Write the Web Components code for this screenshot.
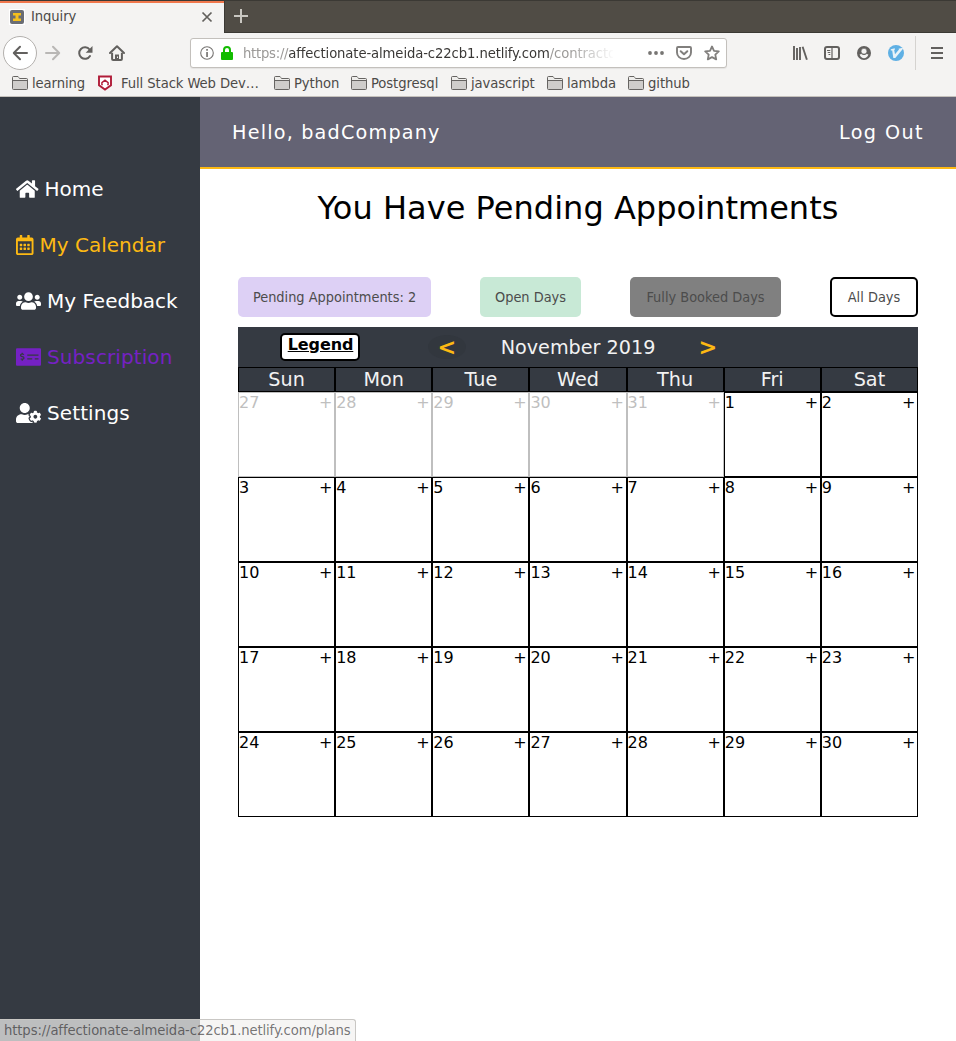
<!DOCTYPE html>
<html lang="en">
<head>
<meta charset="utf-8">
<title>Inquiry</title>
<style>
html,body{margin:0;height:100%;overflow:hidden;background:#fff;font-family:"DejaVu Sans",sans-serif}
</style>
</head>
<body>
<inquiry-window></inquiry-window>
<script>
const define=(name,html,render)=>customElements.define(name,class extends HTMLElement{
  constructor(){
    super();
    const root=this.attachShadow({mode:'open'});
    const t=document.createElement('template');
    t.innerHTML=typeof html==='function'?html(this):html;
    root.append(t.content.cloneNode(true));
  }
  connectedCallback(){ if(render) render(this,this.shadowRoot); }
});
const UI='font-family:"DejaVu Sans Condensed","DejaVu Sans",sans-serif;font-stretch:condensed;';

const ICONS={
 home:['0 0 576 512',22.5,20,'<path fill="currentColor" d="M280.37 148.26L96 300.11V464a16 16 0 0 0 16 16l112.06-.29a16 16 0 0 0 15.92-16V368a16 16 0 0 1 16-16h64a16 16 0 0 1 16 16v95.64a16 16 0 0 0 16 16.05L464 480a16 16 0 0 0 16-16V300L295.67 148.26a12.19 12.19 0 0 0-15.3 0zM571.6 251.47L488 182.56V44.05a12 12 0 0 0-12-12h-56a12 12 0 0 0-12 12v72.61L318.47 43a48 48 0 0 0-61 0L4.34 251.47a12 12 0 0 0-1.6 16.9l25.5 31A12 12 0 0 0 45.15 301l235.22-193.74a12.19 12.19 0 0 1 15.3 0L530.9 301a12 12 0 0 0 16.9-1.6l25.5-31a12 12 0 0 0-1.7-16.93z"/>'],
 calendar:['0 0 448 512',17.5,20,'<path fill="currentColor" d="M148 288h-40c-6.6 0-12-5.4-12-12v-40c0-6.6 5.4-12 12-12h40c6.6 0 12 5.4 12 12v40c0 6.6-5.4 12-12 12zm108-12v-40c0-6.6-5.4-12-12-12h-40c-6.6 0-12 5.4-12 12v40c0 6.6 5.4 12 12 12h40c6.6 0 12-5.4 12-12zm96 0v-40c0-6.6-5.4-12-12-12h-40c-6.6 0-12 5.4-12 12v40c0 6.6 5.4 12 12 12h40c6.6 0 12-5.4 12-12zm-96 96v-40c0-6.6-5.4-12-12-12h-40c-6.6 0-12 5.4-12 12v40c0 6.6 5.4 12 12 12h40c6.6 0 12-5.4 12-12zm-96 0v-40c0-6.6-5.4-12-12-12h-40c-6.6 0-12 5.4-12 12v40c0 6.6 5.4 12 12 12h40c6.6 0 12-5.4 12-12zm192 0v-40c0-6.6-5.4-12-12-12h-40c-6.6 0-12 5.4-12 12v40c0 6.6 5.4 12 12 12h40c6.6 0 12-5.4 12-12zm96-260v352c0 26.5-21.5 48-48 48H48c-26.5 0-48-21.5-48-48V112c0-26.5 21.5-48 48-48h48V12c0-6.6 5.4-12 12-12h40c6.6 0 12 5.4 12 12v52h128V12c0-6.6 5.4-12 12-12h40c6.6 0 12 5.4 12 12v52h48c26.5 0 48 21.5 48 48zm-48 346V160H48v298c0 3.3 2.7 6 6 6h340c3.3 0 6-2.7 6-6z"/>'],
 users:['0 0 640 512',25,20,'<path fill="currentColor" d="M96 224c35.3 0 64-28.7 64-64s-28.7-64-64-64-64 28.7-64 64 28.7 64 64 64zm448 0c35.3 0 64-28.7 64-64s-28.7-64-64-64-64 28.7-64 64 28.7 64 64 64zm32 32h-64c-17.6 0-33.5 7.1-45.1 18.6 40.3 22.1 68.9 62 75.1 109.4h66c17.7 0 32-14.3 32-32v-32c0-35.3-28.7-64-64-64zm-256 0c61.9 0 112-50.1 112-112S381.9 32 320 32 208 82.1 208 144s50.1 112 112 112zm76.8 32h-8.3c-20.8 10-43.9 16-68.5 16s-47.6-6-68.5-16h-8.3C179.6 288 128 339.6 128 403.2V432c0 26.5 21.5 48 48 48h288c26.5 0 48-21.5 48-48v-28.8c0-63.6-51.6-115.2-115.2-115.2zm-223.7-13.4C161.5 263.1 145.6 256 128 256H64c-35.3 0-64 28.7-64 64v32c0 17.7 14.3 32 32 32h65.9c6.3-47.4 34.9-87.3 75.2-109.4z"/>'],
 check:['0 0 640 512',25,20,'<path fill="currentColor" d="M608 32H32C14.33 32 0 46.33 0 64v384c0 17.67 14.33 32 32 32h576c17.67 0 32-14.33 32-32V64c0-17.67-14.33-32-32-32zM176 327.88V344c0 4.42-3.58 8-8 8h-16c-4.42 0-8-3.58-8-8v-16.29c-11.29-.58-22.27-4.52-31.37-11.35-3.9-2.93-4.1-8.77-.57-12.14l11.75-11.21c2.77-2.64 6.89-2.76 10.13-.73 3.87 2.42 8.26 3.72 12.82 3.72h28.11c6.5 0 11.8-5.92 11.8-13.19 0-5.95-3.61-11.19-8.77-12.73l-45-13.5c-18.59-5.58-31.58-23.42-31.58-43.39 0-24.52 19.05-44.44 42.67-45.07V152c0-4.42 3.58-8 8-8h16c4.42 0 8 3.58 8 8v16.29c11.29.58 22.27 4.51 31.37 11.35 3.9 2.93 4.1 8.77.57 12.14l-11.75 11.21c-2.77 2.64-6.89 2.76-10.13.73-3.87-2.43-8.26-3.72-12.82-3.72h-28.11c-6.5 0-11.8 5.92-11.8 13.19 0 5.95 3.61 11.19 8.77 12.73l45 13.5c18.59 5.58 31.58 23.42 31.58 43.39 0 24.53-19.05 44.44-42.67 45.07zM416 312c0 4.42-3.58 8-8 8H296c-4.42 0-8-3.58-8-8v-16c0-4.42 3.58-8 8-8h112c4.42 0 8 3.58 8 8v16zm160 0c0 4.42-3.58 8-8 8h-80c-4.42 0-8-3.58-8-8v-16c0-4.42 3.58-8 8-8h80c4.42 0 8 3.58 8 8v16zm0-96c0 4.42-3.58 8-8 8H296c-4.42 0-8-3.58-8-8v-16c0-4.42 3.58-8 8-8h272c4.42 0 8 3.58 8 8v16z"/>'],
 usercog:['0 0 640 512',25,20,'<path fill="currentColor" d="M610.5 373.3c2.6-14.1 2.6-28.5 0-42.6l25.8-14.9c3-1.7 4.3-5.2 3.3-8.5-6.7-21.6-18.2-41.2-33.2-57.4-2.3-2.5-6-3.1-9-1.4l-25.8 14.9c-10.9-9.3-23.4-16.5-36.9-21.3v-29.8c0-3.4-2.4-6.4-5.7-7.1-22.3-5-45-4.8-66.2 0-3.3.7-5.7 3.7-5.7 7.1v29.8c-13.5 4.8-26 12-36.9 21.3l-25.8-14.9c-2.9-1.7-6.7-1.1-9 1.4-15 16.2-26.5 35.8-33.2 57.4-1 3.3.4 6.8 3.3 8.5l25.8 14.9c-2.6 14.1-2.6 28.5 0 42.6l-25.8 14.9c-3 1.7-4.3 5.2-3.3 8.5 6.7 21.6 18.2 41.1 33.2 57.4 2.3 2.5 6 3.1 9 1.4l25.8-14.9c10.9 9.3 23.4 16.5 36.9 21.3v29.8c0 3.4 2.4 6.4 5.7 7.1 22.3 5 45 4.8 66.2 0 3.3-.7 5.7-3.7 5.7-7.1v-29.8c13.5-4.8 26-12 36.9-21.3l25.8 14.9c2.9 1.7 6.7 1.1 9-1.4 15-16.2 26.5-35.8 33.2-57.4 1-3.3-.4-6.8-3.3-8.5l-25.8-14.9zM496 400.5c-26.8 0-48.5-21.8-48.5-48.5s21.8-48.5 48.5-48.5 48.5 21.8 48.5 48.5-21.7 48.5-48.5 48.5zM224 256c70.7 0 128-57.3 128-128S294.7 0 224 0 96 57.3 96 128s57.3 128 128 128zm201.2 226.5c-2.3-1.2-4.6-2.6-6.8-3.9l-7.9 4.6c-6 3.4-12.8 5.3-19.6 5.3-10.9 0-21.4-4.6-28.9-12.6-18.3-19.8-32.3-43.9-40.2-69.6-5.5-17.7 1.9-36.4 17.9-45.7l7.9-4.6c-.1-2.6-.1-5.2 0-7.8l-7.9-4.6c-16-9.2-23.4-28-17.9-45.7.9-2.9 2.2-5.8 3.2-8.7-3.8-.3-7.5-1.2-11.4-1.2h-16.7c-22.2 10.2-46.9 16-72.9 16s-50.6-5.8-72.9-16h-16.7C60.2 288 0 348.2 0 422.4V464c0 26.5 21.5 48 48 48h352c10.1 0 19.5-3.2 27.2-8.5-1.2-3.8-2-7.7-2-11.8v-9.2z"/>'],
 favicon:['0 0 16 16',16,16,'<rect width="16" height="16" fill="#fff"/><rect x="1" y="1" width="14" height="14" rx="2" fill="#6a6d74"/><path fill="#f5c01c" d="M4 4h8v2.500H9.500v3H12V12H4V9.500h2.500v-3H4z"/>'],
 close:['0 0 12 12',12,12,'<path d="M1.500 1.500l9 9M10.500 1.500l-9 9" stroke="#62605d" stroke-width="1.700"/>'],
 plus:['0 0 16 16',16,16,'<path d="M8 1v14M1 8h14" stroke="#c9c7c1" stroke-width="2"/>'],
 back:['0 0 16 16',16,16,'<path d="M15 8H2M8 1.800L1.800 8 8 14.200" fill="none" stroke="#62605e" stroke-width="2" stroke-linecap="round" stroke-linejoin="round"/>'],
 forward:['0 0 16 16',16,16,'<path d="M1 8h13M8 1.800L14.200 8 8 14.200" fill="none" stroke="#b9b7b5" stroke-width="2" stroke-linecap="round" stroke-linejoin="round"/>'],
 reload:['0 0 16 16',16,16,'<path d="M13 11A5.800 5.800 0 1 1 12.600 4.500" fill="none" stroke="#62605e" stroke-width="2" stroke-linecap="round"/><path d="M15.500.9v6.800H8.700z" fill="#62605e"/>'],
 house:['0 0 16 16',16,16,'<path d="M1 8L8 1.300 15 8" fill="none" stroke="#62605e" stroke-width="2" stroke-linecap="round" stroke-linejoin="round"/><path d="M3.100 7.800V14a1 1 0 0 0 1 1h7.800a1 1 0 0 0 1-1V7.800" fill="none" stroke="#62605e" stroke-width="2"/><path d="M6 9.500h4V15H6z" fill="#62605e"/><path d="M8 11.500h1V13H8z" fill="#f4f3f2"/>'],
 info:['0 0 14 14',14,14,'<circle cx="7" cy="7" r="6.300" fill="none" stroke="#777573" stroke-width="1.100"/><path d="M6.200 3.100h1.700v1.700H6.200zM6.200 6h1.700v5H6.200z" fill="#777573"/>'],
 lock:['0 0 12 14',12,14,'<path d="M3 7V4a3 3 0 0 1 6 0v3" fill="none" stroke="#12bc00" stroke-width="2"/><rect y="6" width="12" height="8" rx="1" fill="#12bc00"/>'],
 dots:['0 0 16 6',16,6,'<g fill="#777573"><circle cx="2" cy="3" r="1.900"/><circle cx="8" cy="3" r="1.900"/><circle cx="14" cy="3" r="1.900"/></g>'],
 pocket:['0 0 16 16',16,16,'<path d="M2 2h12a1 1 0 0 1 1 1V7.500A7 6.500 0 0 1 1 7.500V3a1 1 0 0 1 1-1z" fill="none" stroke="#817f7d" stroke-width="1.900"/><path d="M4.700 6.200L8 9.200l3.300-3" fill="none" stroke="#817f7d" stroke-width="2" stroke-linecap="round" stroke-linejoin="round"/>'],
 star:['0 0 16 16',16,16,'<path d="M8 1.500l2 4.300 4.800.6-3.500 3.300.9 4.700L8 12.100l-4.200 2.300.9-4.700L1.200 6.400 6 5.800z" fill="none" stroke="#817f7d" stroke-width="1.800" stroke-linejoin="round"/>'],
 library:['0 0 16 16',16,16,'<path d="M2 1v14M5 3v12M8 2v13M10.600 1.800l4.300 12.900" stroke="#62605e" stroke-width="1.900" fill="none"/>'],
 sidebar:['0 0 16 16',16,16,'<rect x="1" y="2" width="14" height="12" rx="2" fill="none" stroke="#62605e" stroke-width="2"/><path d="M8 2v12" stroke="#62605e" stroke-width="1.200"/><path d="M3 5.500h3.300M3.700 7.500h2.600M4.500 9.500h1.800" stroke="#62605e"/>'],
 account:['0 0 14 14',14,14,'<circle cx="7" cy="7" r="7" fill="#62605e"/><path d="M2.600 8.600C3.500 11.400 5.200 12.200 7 12.200s3.500-.8 4.400-3.600L9.600 7.900A3.500 3.500 0 0 1 4.400 7.900z" fill="#f4f3f2"/><circle cx="7" cy="5.200" r="2.900" fill="#f4f3f2" stroke="#62605e" stroke-width=".6"/>'],
 vim:['0 0 16 16',16,16,'<circle cx="8" cy="8" r="8" fill="#5fb0e4"/><path d="M2.800 4.300l4-1v1.400l-.6.300.8 4.200 4-4.800-.5-.7 4.300-.9v1.200L7.300 13H5.300L4.200 5.400l-1.400.1z" fill="#e9f3f8"/>'],
 menu:['0 0 12 12',12,12,'<path d="M0 1h12M0 6h12M0 11h12" stroke="#62605e" stroke-width="1.900"/>'],
 folder:['0 0 16 14',16,14,'<path d="M.5 12.500V1.500a1 1 0 0 1 1-1H6L7.500 2.500h7a1 1 0 0 1 1 1v9a1 1 0 0 1-1 1h-13a1 1 0 0 1-1-1z" fill="#cfcdcb" stroke="#666462"/><path d="M1 1h5l1.300 2H15v1.500H1z" fill="#eeedeb"/><path d="M.5 4.500h15" stroke="#666462"/>'],
 shield:['0 0 16 16',16,16,'<path d="M2 1.500h12v8.700L8 14.600 2 10.200z" fill="#fff" stroke="#b01c38" stroke-width="1.900"/><path d="M5.800 9.600H4.900V7.700L8 5.200l3.100 2.500v1.900h-.9" fill="none" stroke="#b01c38" stroke-width="1.400"/>']
};
define('ui-icon',el=>{
  const [box,w,h,body]=ICONS[el.getAttribute('name')]||ICONS.home;
  return `<style>:host{display:block;flex:none;width:${w}px;height:${h}px}svg{display:block}</style><svg viewBox="${box}" width="${w}" height="${h}">${body}</svg>`;
});

define('tab-strip',`<style>
:host{display:flex;height:33px;background:#504c45;box-shadow:inset 0 1px #3b3934,inset 0 -1px #3b3934;${UI}font-size:14.670px;letter-spacing:-.1px}
.tab{width:224px;height:33px;box-sizing:border-box;background:#f4f3f2;border-top:1px solid #3b3934;box-shadow:inset 0 2px #f0774c;display:flex;align-items:center;padding:0 11px 0 9px;color:#4c4a48}
.label{margin-left:6px;flex:1;white-space:nowrap;line-height:20px;padding-bottom:2px}
.new{border-left:1px solid #3b3934;padding:8px 0 0 8px}
</style><div class="tab"><ui-icon name="favicon"></ui-icon><span class="label">Inquiry</span><ui-icon name="close"></ui-icon></div><div class="new"><ui-icon name="plus"></ui-icon></div>`);

define('url-bar',`<style>
:host{display:flex;align-items:center;box-sizing:border-box;width:537px;height:30px;border:1px solid #c3c0bc;border-radius:3px;background:#fff;padding:0 6px 0 9px;box-shadow:0 1px 1px #0001;${UI}font-size:14.670px;letter-spacing:-.1px;color:#9b9997}
.url{width:370px;margin-left:10px;white-space:nowrap;line-height:22px;-webkit-mask-image:linear-gradient(to right,#000 325px,transparent 372px);mask-image:linear-gradient(to right,#000 325px,transparent 372px)}
b{font-weight:400;color:#3a3836}
.scheme{letter-spacing:-.25px}
.lock{margin-left:7px}.dots{margin-left:35px}.pk{margin-left:12px}.st{margin-left:12px}
</style><ui-icon name="info"></ui-icon><ui-icon class="lock" name="lock"></ui-icon><div class="url"><span class="scheme">https://</span><b>affectionate-almeida-c22cb1.netlify.com</b>/contracto</div><ui-icon class="dots" name="dots"></ui-icon><ui-icon class="pk" name="pocket"></ui-icon><ui-icon class="st" name="star"></ui-icon>`);

define('nav-toolbar',`<style>
:host{display:flex;align-items:center;height:40px;background:#f4f3f2;padding-left:3px}
.back{box-sizing:border-box;width:34px;height:34px;border:1px solid #b3b0ad;border-radius:50%;background:#fff;display:grid;place-items:center}
.fw{margin-left:8px}.rl{margin-left:16px}.hm{margin-left:16px}url-bar{margin-left:65px}
.lib{margin-left:65px}.sb{margin-left:16px}.ac{margin-left:17px}.vm{margin-left:17px}
.sep{width:1px;height:34px;background:#d5d3d0;margin:0 15px 0 11px}
</style><div class="back"><ui-icon name="back"></ui-icon></div><ui-icon class="fw" name="forward"></ui-icon><ui-icon class="rl" name="reload"></ui-icon><ui-icon class="hm" name="house"></ui-icon><url-bar></url-bar><ui-icon class="lib" name="library"></ui-icon><ui-icon class="sb" name="sidebar"></ui-icon><ui-icon class="ac" name="account"></ui-icon><ui-icon class="vm" name="vim"></ui-icon><div class="sep"></div><ui-icon name="menu"></ui-icon>`);

define('book-mark',el=>`<style>:host{display:flex;align-items:center;white-space:nowrap;line-height:17px;gap:${el.getAttribute('icon')==='shield'?8:4}px}ui-icon{margin-top:1px}</style><ui-icon name="${el.getAttribute('icon')||'folder'}"></ui-icon><span><slot></slot></span>`);
define('bookmarks-bar',`<style>:host{display:grid;grid-template-columns:85px 177px 77px 100px 96px 81px 1fr;align-items:center;height:24px;box-sizing:border-box;padding:0 0 4px 12px;background:#f4f3f2;border-bottom:1px solid #c5c1bc;${UI}font-size:14.670px;letter-spacing:-.08px;color:#4c4a48}</style>
<book-mark>learning</book-mark><book-mark icon="shield">Full Stack Web Dev…</book-mark><book-mark>Python</book-mark><book-mark>Postgresql</book-mark><book-mark>javascript</book-mark><book-mark>lambda</book-mark><book-mark>github</book-mark>`);

define('nav-link',el=>`<style>:host{display:flex;align-items:center;height:56px;padding-left:16px;font-size:20px;color:#fff;white-space:nowrap}span{margin-left:6px}</style><ui-icon name="${el.getAttribute('icon')}"></ui-icon><span><slot></slot></span>`);
define('side-bar',`<style>:host{display:block;width:200px;background:#353a42;padding-top:64px;box-sizing:border-box}.on{color:#fdb913}.sub{color:#7521c4;letter-spacing:.1px}.set{letter-spacing:.1px}</style>
<nav-link icon="home">Home</nav-link><nav-link class="on" icon="calendar">My Calendar</nav-link><nav-link icon="users">My Feedback</nav-link><nav-link class="sub" icon="check">Subscription</nav-link><nav-link class="set" icon="usercog">Settings</nav-link>`);

define('top-bar',`<style>:host{display:flex;justify-content:space-between;align-items:center;box-sizing:border-box;height:72px;padding:0 32px;background:#646374;border-bottom:2px solid #fdb913;color:#fff;font-size:19.200px;letter-spacing:1.200px}.out{letter-spacing:1.420px}</style><span>Hello, badCompany</span><span class="out">Log Out</span>`);

define('filter-button',`<style>:host{display:grid;place-items:center;box-sizing:border-box;height:40px;border-radius:5px;${UI}font-size:14.400px;color:#4c4c4c;white-space:nowrap}</style><slot></slot>`);
define('filter-row',`<style>:host{display:flex;justify-content:space-between}.p{width:193px;background:#ddd0f5}.o{width:101px;background:#c8e9d6}.f{width:151px;background:#808080}.a{width:88px;border:2px solid #000}</style>
<filter-button class="p">Pending Appointments: 2</filter-button><filter-button class="o">Open Days</filter-button><filter-button class="f">Fully Booked Days</filter-button><filter-button class="a">All Days</filter-button>`);

define('calendar-head',`<style>:host{display:grid;grid-template-columns:42px 80px 68px 38px 224px 36px 1fr;align-items:center;height:40px;background:#353a42;color:#f2f2f2;font-size:19.200px}
.legend{grid-column:2;box-sizing:border-box;height:28px;border:2px solid #000;border-radius:5px;background:#fff;color:#000;font-size:16px;letter-spacing:-.1px;padding-left:1px;line-height:20px;font-weight:700;text-decoration:underline;text-align:center}
.arrow{color:#fdb913;font-weight:700;font-size:22.400px;text-align:center;line-height:24px}
.prev{grid-column:4;background:#32373e;border-radius:50%}.title{text-align:center}
</style><div class="legend">Legend</div><div class="arrow prev">&lt;</div><div class="title">November 2019</div><div class="arrow">&gt;</div>`);

define('day-cell',`<style>:host{display:flex;justify-content:space-between;box-sizing:border-box;border:1px solid #000;font-size:16px;line-height:19px;padding-right:1.700px}:host([muted]){color:#bfbfbf;border-color:#bfbfbf}</style><span><slot></slot></span><span>+</span>`);
define('month-grid',`<style>:host{display:grid;grid-template-columns:repeat(7,1fr);grid-template-rows:25px repeat(5,85px)}
.wd{box-sizing:border-box;border:1px solid #000;background:#353a42;color:#f2f2f2;font-size:19.200px;line-height:23px;text-align:center}</style>`,(el,root)=>{
  for(const d of ['Sun','Mon','Tue','Wed','Thu','Fri','Sat']){const n=document.createElement('div');n.className='wd';n.textContent=d;root.append(n)}
  for(let i=-4;i<=30;i++){const c=document.createElement('day-cell');c.textContent=i<1?31+i:i;if(i<1)c.setAttribute('muted','');root.append(c)}
});

define('inquiry-window',`<style>
:host{display:grid;grid-template-rows:33px 40px 24px 1fr;height:1041px;overflow:hidden;position:relative}
.page{display:grid;grid-template-columns:200px 1fr}
.body{padding:0 38px}
h1{margin:21px 0 50px;font-size:32px;letter-spacing:.03px;line-height:37px;font-weight:400;text-align:center;color:#000}
filter-row{margin-bottom:10px}
.status{position:absolute;left:0;bottom:0;box-sizing:border-box;width:356px;height:22px;background:rgba(242,241,240,.72);border:1px solid #c9c7c4;border-left:0;border-bottom:0;border-radius:0 3px 0 0;padding-left:4px;${UI}font-size:14.670px;letter-spacing:-.11px;line-height:20px;color:rgba(35,33,31,.62);white-space:nowrap}
</style><tab-strip></tab-strip><nav-toolbar></nav-toolbar><bookmarks-bar></bookmarks-bar>
<div class="page"><side-bar></side-bar><main><top-bar></top-bar><div class="body"><h1>You Have Pending Appointments</h1><filter-row></filter-row><calendar-head></calendar-head><month-grid></month-grid></div></main></div>
<div class="status">https://affectionate-almeida-c22cb1.netlify.com/plans</div>`);
</script>
</body>
</html>
